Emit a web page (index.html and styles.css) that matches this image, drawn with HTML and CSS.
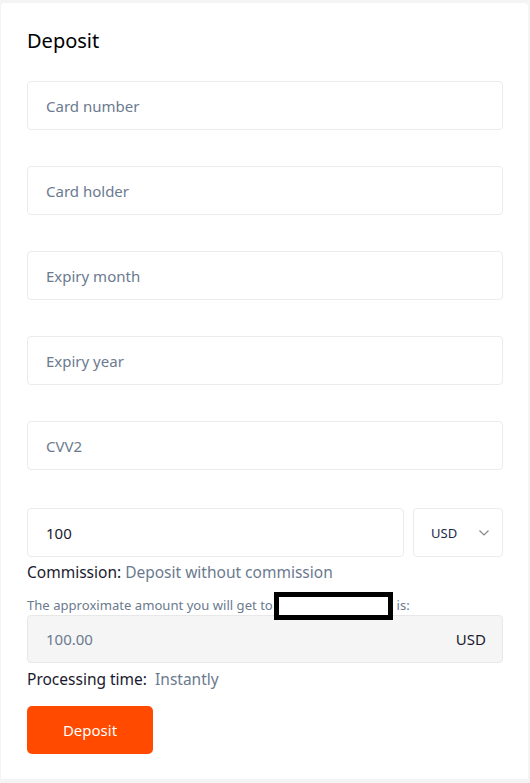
FILE: index.html
```html
<!DOCTYPE html>
<html lang="en">
<head>
    <meta charset="UTF-8">
    <meta name="viewport" content="width=device-width, initial-scale=1.0">
    <title>Deposit</title>
    <link rel="stylesheet" href="styles.css">
</head>
<body>

<div class="card">
    <h1 class="title">Deposit</h1>

    <div class="fields">
        <input class="field" type="text" placeholder="Card number">
        <input class="field" type="text" placeholder="Card holder">
        <input class="field" type="text" placeholder="Expiry month">
        <input class="field" type="text" placeholder="Expiry year">
        <input class="field" type="text" placeholder="CVV2">
    </div>

    <div class="amount-row">
        <input class="field amount" type="text" value="100">
        <div class="currency">
            <span>USD</span>
            <svg class="chevron" width="12" height="8" viewBox="0 0 12 8">
                <path d="M1.5 1.5 L6 6 L10.5 1.5" fill="none" stroke="#888" stroke-width="1.2"/>
            </svg>
        </div>
    </div>

    <p class="commission"><span class="label">Commission:</span> Deposit without commission</p>

    <p class="approx">The approximate amount you will get to <span class="redacted"></span> is:</p>
    <div class="result">
        <span class="result-value">100.00</span>
        <span class="result-currency">USD</span>
    </div>

    <p class="processing"><span class="label">Processing time:</span>&nbsp; Instantly</p>

    <button class="submit">Deposit</button>
</div>

</body>
</html>
```

FILE: styles.css
```css
body {
    margin: 0;
    font-family: 'Noto Sans', 'Open Sans', sans-serif;
    background-color: #f4f4f4;
}

.card {
    margin: 3px 2px 0 1px;
    padding: 24px 25px 24px 26px;
    min-height: 776px;
    box-sizing: border-box;
    background-color: #fff;
    border-radius: 4px 4px 0 0;
}

.title {
    margin: 0 0 26px;
    font-size: 20px;
    font-weight: 400;
    line-height: 28px;
    color: #000;
}

.fields {
    display: flex;
    flex-direction: column;
    gap: 36px;
}

.field {
    display: block;
    width: 100%;
    height: 49px;
    box-sizing: border-box;
    padding: 0 18px;
    font-family: inherit;
    font-size: 15px;
    color: #1a1a2e;
    background: #fff;
    border: 1px solid #ebebeb;
    border-radius: 4px;
    outline: none;
}

.field::placeholder {
    color: #6b7a8f;
}

.amount-row {
    display: flex;
    gap: 9px;
    margin-top: 38px;
}

.amount {
    flex: 1;
}

.currency {
    width: 90px;
    height: 49px;
    box-sizing: border-box;
    display: flex;
    align-items: center;
    justify-content: space-between;
    padding: 0 12px 0 17px;
    font-size: 13px;
    color: #1a2a4a;
    border: 1px solid #ebebeb;
    border-radius: 4px;
}

.chevron {
    margin-top: 1px;
}

.commission {
    margin: 4px 0 0;
    font-size: 15.5px;
    line-height: 22px;
    color: #6b7a8f;
}

.label {
    color: #1a1a2e;
}

.approx {
    margin: 12px 0 0;
    font-size: 13.1px;
    line-height: 20px;
    color: #6b7a8f;
}

.redacted {
    display: inline-block;
    width: 109px;
    height: 18px;
    margin: -6px 0 -4px -2px;
    vertical-align: middle;
    border: 5px solid #000;
    background: #fff;
    position: relative;
    top: 1px;
}

.result {
    display: flex;
    align-items: center;
    justify-content: space-between;
    height: 48px;
    box-sizing: border-box;
    padding: 0 16px 0 18px;
    margin-top: 0;
    font-size: 15px;
    background-color: #f5f5f5;
    border: 1px solid #e8e8e8;
    border-radius: 4px;
}

.result-value {
    color: #6b7a8f;
}

.result-currency {
    color: #1a1a2e;
}

.processing {
    margin: 5px 0 0;
    font-size: 15.5px;
    line-height: 22px;
    color: #6b7a8f;
}

.submit {
    margin-top: 16px;
    width: 126px;
    height: 48px;
    font-family: inherit;
    font-size: 15px;
    color: #fff;
    background-color: #ff4a00;
    border: none;
    border-radius: 5px;
    cursor: pointer;
}
```
